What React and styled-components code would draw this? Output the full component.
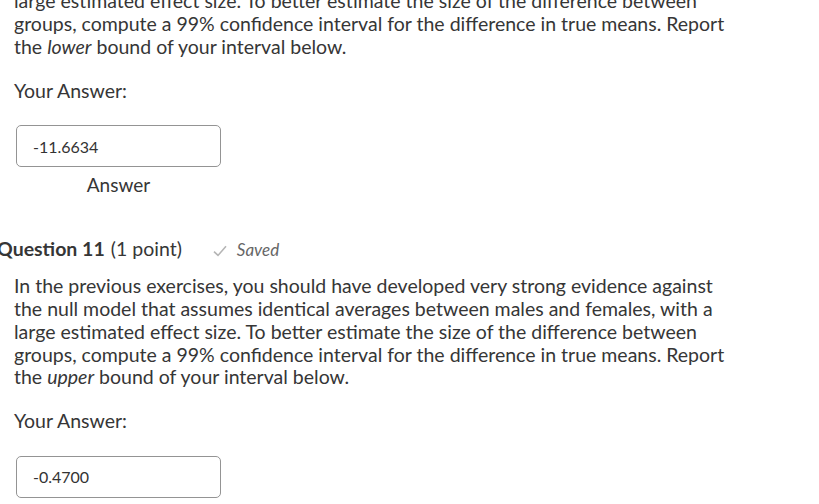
import React from "react";
import styled, { createGlobalStyle } from "styled-components";

const Global = createGlobalStyle`
  html, body { margin: 0; padding: 0; background: #fff; overflow: hidden; }
  body { font-family: Lato, "Noto Sans", sans-serif; color: #363636; }
`;

const Page = styled.div`
  width: 805px;
  padding: 0 0 0 14px;
  margin-top: -10px;
`;

const Paragraph = styled.p`
  margin: ${(p) => p.$top || 0}px 0 0 0;
  width: 725px;
  font-size: 19.5px;
  line-height: 22.75px;
`;

const Label = styled.div`
  font-size: 19.5px;
  line-height: 22.75px;
  margin-top: ${(p) => p.$top}px;
`;

const AnswerBlock = styled.div`
  display: flex;
  flex-direction: column;
  align-items: center;
  width: 205px;
  margin-left: 2px;
  margin-top: ${(p) => p.$top}px;
`;

const Box = styled.div`
  box-sizing: border-box;
  width: 205px;
  height: 42px;
  border: 1px solid #949494;
  border-radius: 5px;
  padding: 0 16px;
  display: flex;
  align-items: center;
  font-size: 16px;
  color: #333;
`;

const AnswerCaption = styled.div`
  font-size: 19px;
  line-height: 22px;
  margin-top: 7px;
`;

const Heading = styled.div`
  display: flex;
  align-items: baseline;
  margin-left: -17px;
  margin-top: ${(p) => p.$top}px;
  font-size: 19.5px;
  line-height: 22.75px;
`;

const Bold = styled.span`
  font-weight: 700;
`;

const Points = styled.span`
  margin-left: 6px;
`;

const Saved = styled.span`
  margin-left: 31px;
  display: inline-flex;
  align-items: center;
  gap: 10px;
  font-size: 17px;
  font-style: italic;
  color: #666;
`;

const Check = styled.svg`
  width: 14px;
  height: 12px;
  position: relative;
  top: 1px;
`;

export default function App() {
  return (
    <>
      <Global />
      <Page>
        <Paragraph>
          large estimated effect size. To better estimate the size of the difference between
          groups, compute a 99% confidence interval for the difference in true means. Report
          the <i>lower</i> bound of your interval below.
        </Paragraph>
        <Label $top={22}>Your Answer:</Label>
        <AnswerBlock $top={22}>
          <Box>-11.6634</Box>
          <AnswerCaption>Answer</AnswerCaption>
        </AnswerBlock>
        <Heading $top={42}>
          <Bold>Question 11</Bold>
          <Points>(1 point)</Points>
          <Saved>
            <Check viewBox="0 0 14 12">
              <path d="M1 6.6 L5 10.4 L13 1.2" fill="none" stroke="#b5b5b5" strokeWidth="1.6" />
            </Check>
            Saved
          </Saved>
        </Heading>
        <Paragraph $top={14}>
          In the previous exercises, you should have developed very strong evidence against
          the null model that assumes identical averages between males and females, with a
          large estimated effect size. To better estimate the size of the difference between
          groups, compute a 99% confidence interval for the difference in true means. Report
          the <i>upper</i> bound of your interval below.
        </Paragraph>
        <Label $top={21}>Your Answer:</Label>
        <AnswerBlock $top={23}>
          <Box>-0.4700</Box>
        </AnswerBlock>
      </Page>
    </>
  );
}
